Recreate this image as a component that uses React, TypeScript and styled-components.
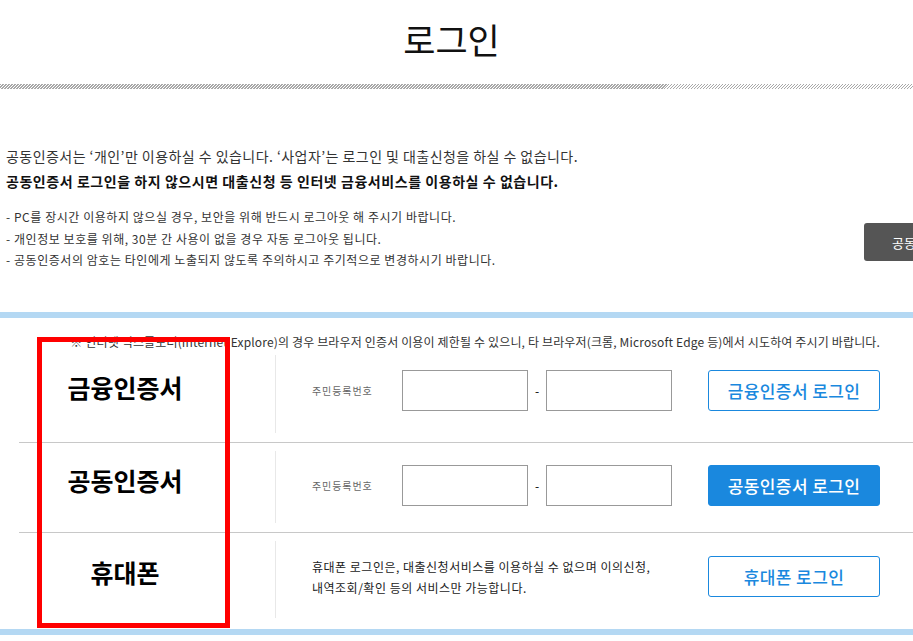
import React from "react";
import styled, { createGlobalStyle } from "styled-components";

const GlobalStyle = createGlobalStyle`
  html, body {
    margin: 0;
    padding: 0;
    background: #fff;
    overflow-x: hidden;
  }
  body {
    font-family: "Noto Sans CJK KR", "Noto Sans", sans-serif;
    color: #333;
  }
`;

const Page = styled.div`
  position: relative;
  width: 100%;
`;

const Header = styled.header`
  padding: 19px 0 25px;
  text-align: center;
`;

const Title = styled.h1`
  margin: 0;
  padding-right: 10px;
  font-size: 35px;
  line-height: 40px;
  font-weight: 400;
  color: #111;
`;

const Hatch = styled.div`
  height: 5px;
  background: repeating-linear-gradient(135deg, #a8a8a8 0 1px, #fff 1px 2.12px);
`;

const InfoSection = styled.section`
  display: flex;
  overflow: hidden;
  padding: 57px 0 41px 6px;
`;

const InfoText = styled.div`
  flex: 0 0 858px;
  white-space: nowrap;
`;

const Lead = styled.p<{ $strong?: boolean }>`
  margin: 0 0 ${({ $strong }) => ($strong ? "15px" : "5px")};
  font-size: 14px;
  line-height: 20px;
  letter-spacing: ${({ $strong }) => ($strong ? "0.55px" : "0.45px")};
  font-weight: ${({ $strong }) => ($strong ? 700 : 400)};
  color: ${({ $strong }) => ($strong ? "#111" : "#333")};
`;

const Bullets = styled.ul`
  margin: 0;
  padding: 0;
  list-style: none;
`;

const Bullet = styled.li`
  font-size: 12px;
  line-height: 21.5px;
  letter-spacing: 0.55px;
  color: #333;
`;

const SideButton = styled.button`
  flex: 0 0 140px;
  height: 38px;
  margin-top: 77px;
  padding: 0 0 0 28px;
  border: 0;
  border-radius: 3px;
  background: #555;
  color: #fff;
  font-family: inherit;
  font-size: 13px;
  text-align: left;
  white-space: nowrap;
`;

const BlueBar = styled.div`
  height: 6px;
  background: #b4d8f3;
`;

const LoginArea = styled.section`
  padding-left: 19px;
`;

const Notice = styled.p`
  margin: 15px 0 2px;
  padding-right: 33px;
  font-size: 12px;
  line-height: 18px;
  letter-spacing: 0.15px;
  text-align: right;
  white-space: nowrap;
  color: #333;
`;

const Row = styled.div<{ $pad: string; $last?: boolean }>`
  display: flex;
  padding: ${({ $pad }) => $pad};
  border-bottom: ${({ $last }) => ($last ? "0" : "1px solid #c8c8c8")};
`;

const LabelCol = styled.div`
  flex: 0 0 212px;
  display: flex;
  align-items: center;
  justify-content: center;
  padding-bottom: 14px;
  font-size: 25px;
  font-weight: 700;
  color: #000;
`;

const Content = styled.div<{ $h: number; $lift: number }>`
  flex: 1;
  box-sizing: border-box;
  height: ${({ $h }) => $h}px;
  margin-left: 44px;
  padding: 0 33px ${({ $lift }) => $lift}px 36px;
  border-left: 1px solid #e8e8e8;
  display: flex;
  align-items: center;
`;

const FieldLabel = styled.span`
  flex: 0 0 90px;
  font-size: 10px;
  letter-spacing: 0.9px;
  color: #666;
`;

const Input = styled.input`
  box-sizing: border-box;
  width: 126px;
  height: 41px;
  border: 1px solid #999;
  padding: 0 8px;
  font-family: inherit;
  outline: none;
`;

const Dash = styled.span`
  width: 18px;
  text-align: center;
  font-size: 12px;
  color: #000;
`;

const LoginButton = styled.button<{ $filled?: boolean }>`
  box-sizing: border-box;
  width: 172px;
  height: 41px;
  margin-left: auto;
  border: 1px solid #1a88de;
  border-radius: 3px;
  background: ${({ $filled }) => ($filled ? "#1a88de" : "#fff")};
  color: ${({ $filled }) => ($filled ? "#fff" : "#1a88de")};
  font-family: inherit;
  font-size: 17px;
  letter-spacing: 0.4px;
  font-weight: 500;
`;

const PhoneText = styled.p`
  margin: 0;
  font-size: 12px;
  line-height: 21px;
  letter-spacing: 0.5px;
  color: #222;
`;

const Annotation = styled.div`
  position: absolute;
  left: 37px;
  top: 337px;
  width: 193px;
  height: 291px;
  box-sizing: border-box;
  border: 5px solid #ff0000;
  pointer-events: none;
`;

const CertFields = () => (
  <>
    <FieldLabel>주민등록번호</FieldLabel>
    <Input />
    <Dash>-</Dash>
    <Input />
  </>
);

export default function App() {
  return (
    <Page>
      <GlobalStyle />
      <Header>
        <Title>로그인</Title>
      </Header>
      <Hatch />

      <InfoSection>
        <InfoText>
          <Lead>
            공동인증서는 ‘개인’만 이용하실 수 있습니다. ‘사업자’는 로그인 및 대출신청을 하실 수 없습니다.
          </Lead>
          <Lead $strong>
            공동인증서 로그인을 하지 않으시면 대출신청 등 인터넷 금융서비스를 이용하실 수 없습니다.
          </Lead>
          <Bullets>
            <Bullet>- PC를 장시간 이용하지 않으실 경우, 보안을 위해 반드시 로그아웃 해 주시기 바랍니다.</Bullet>
            <Bullet>- 개인정보 보호를 위해, 30분 간 사용이 없을 경우 자동 로그아웃 됩니다.</Bullet>
            <Bullet>- 공동인증서의 암호는 타인에게 노출되지 않도록 주의하시고 주기적으로 변경하시기 바랍니다.</Bullet>
          </Bullets>
        </InfoText>
        <SideButton>공동인증서 관리</SideButton>
      </InfoSection>

      <BlueBar />

      <LoginArea>
        <Notice>
          ※ 인터넷 익스플로러(Internet Explore)의 경우 브라우저 인증서 이용이 제한될 수 있으니, 타 브라우저(크롬, Microsoft Edge 등)에서 시도하여 주시기 바랍니다.
        </Notice>

        <Row $pad="2px 0 9px">
          <LabelCol>금융인증서</LabelCol>
          <Content $h={78} $lift={6}>
            <CertFields />
            <LoginButton>금융인증서 로그인</LoginButton>
          </Content>
        </Row>

        <Row $pad="8px 0 9px">
          <LabelCol>공동인증서</LabelCol>
          <Content $h={72} $lift={2}>
            <CertFields />
            <LoginButton $filled>공동인증서 로그인</LoginButton>
          </Content>
        </Row>

        <Row $pad="8px 0 11px" $last>
          <LabelCol>휴대폰</LabelCol>
          <Content $h={77} $lift={5}>
            <PhoneText>
              휴대폰 로그인은, 대출신청서비스를 이용하실 수 없으며 이의신청,
              <br />
              내역조회/확인 등의 서비스만 가능합니다.
            </PhoneText>
            <LoginButton>휴대폰 로그인</LoginButton>
          </Content>
        </Row>
      </LoginArea>

      <BlueBar />
      <Annotation />
    </Page>
  );
}
